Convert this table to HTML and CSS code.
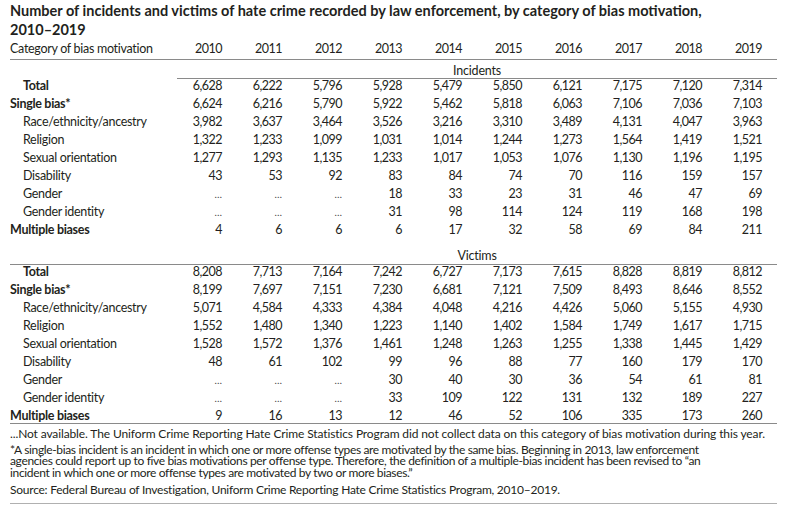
FILE: index.html
```html
<!DOCTYPE html>
<html lang="en">
<head>
<meta charset="utf-8">
<title>Hate crime incidents and victims, 2010–2019</title>
<link rel="stylesheet" href="styles.css">
</head>
<body>
<div class="page">
  <h1 class="title">Number of incidents and victims of hate crime recorded by law enforcement, by category of bias motivation, <span class="keep">2010–2019</span></h1>
  <table class="data">
    <colgroup>
      <col class="c-label">
      <col class="c-year"><col class="c-year"><col class="c-year"><col class="c-year"><col class="c-year">
      <col class="c-year"><col class="c-year"><col class="c-year"><col class="c-year"><col class="c-year">
    </colgroup>
    <thead>
      <tr class="head">
        <th class="lab">Category of bias motivation</th>
        <th>2010</th><th>2011</th><th>2012</th><th>2013</th><th>2014</th>
        <th>2015</th><th>2016</th><th>2017</th><th>2018</th><th>2019</th>
      </tr>
    </thead>
    <tbody>
      <tr class="sec-inc">
        <td class="blank"></td>
        <td class="sec-name" colspan="10">Incidents</td>
      </tr>
      <tr>
        <td class="lab ind bold">Total</td>
        <td>6,628</td><td>6,222</td><td>5,796</td><td>5,928</td><td>5,479</td><td>5,850</td><td>6,121</td><td>7,175</td><td>7,120</td><td>7,314</td>
      </tr>
      <tr>
        <td class="lab bold">Single bias*</td>
        <td>6,624</td><td>6,216</td><td>5,790</td><td>5,922</td><td>5,462</td><td>5,818</td><td>6,063</td><td>7,106</td><td>7,036</td><td>7,103</td>
      </tr>
      <tr>
        <td class="lab ind">Race/ethnicity/ancestry</td>
        <td>3,982</td><td>3,637</td><td>3,464</td><td>3,526</td><td>3,216</td><td>3,310</td><td>3,489</td><td>4,131</td><td>4,047</td><td>3,963</td>
      </tr>
      <tr>
        <td class="lab ind">Religion</td>
        <td>1,322</td><td>1,233</td><td>1,099</td><td>1,031</td><td>1,014</td><td>1,244</td><td>1,273</td><td>1,564</td><td>1,419</td><td>1,521</td>
      </tr>
      <tr>
        <td class="lab ind">Sexual orientation</td>
        <td>1,277</td><td>1,293</td><td>1,135</td><td>1,233</td><td>1,017</td><td>1,053</td><td>1,076</td><td>1,130</td><td>1,196</td><td>1,195</td>
      </tr>
      <tr>
        <td class="lab ind">Disability</td>
        <td>43</td><td>53</td><td>92</td><td>83</td><td>84</td><td>74</td><td>70</td><td>116</td><td>159</td><td>157</td>
      </tr>
      <tr>
        <td class="lab ind">Gender</td>
        <td><span class="na">…</span></td><td><span class="na">…</span></td><td><span class="na">…</span></td><td>18</td><td>33</td><td>23</td><td>31</td><td>46</td><td>47</td><td>69</td>
      </tr>
      <tr>
        <td class="lab ind">Gender identity</td>
        <td><span class="na">…</span></td><td><span class="na">…</span></td><td><span class="na">…</span></td><td>31</td><td>98</td><td>114</td><td>124</td><td>119</td><td>168</td><td>198</td>
      </tr>
      <tr>
        <td class="lab bold">Multiple biases</td>
        <td>4</td><td>6</td><td>6</td><td>6</td><td>17</td><td>32</td><td>58</td><td>69</td><td>84</td><td>211</td>
      </tr>
      <tr class="sec-vic">
        <td class="blank"></td>
        <td class="sec-name" colspan="10">Victims</td>
      </tr>
      <tr>
        <td class="lab ind bold">Total</td>
        <td>8,208</td><td>7,713</td><td>7,164</td><td>7,242</td><td>6,727</td><td>7,173</td><td>7,615</td><td>8,828</td><td>8,819</td><td>8,812</td>
      </tr>
      <tr>
        <td class="lab bold">Single bias*</td>
        <td>8,199</td><td>7,697</td><td>7,151</td><td>7,230</td><td>6,681</td><td>7,121</td><td>7,509</td><td>8,493</td><td>8,646</td><td>8,552</td>
      </tr>
      <tr>
        <td class="lab ind">Race/ethnicity/ancestry</td>
        <td>5,071</td><td>4,584</td><td>4,333</td><td>4,384</td><td>4,048</td><td>4,216</td><td>4,426</td><td>5,060</td><td>5,155</td><td>4,930</td>
      </tr>
      <tr>
        <td class="lab ind">Religion</td>
        <td>1,552</td><td>1,480</td><td>1,340</td><td>1,223</td><td>1,140</td><td>1,402</td><td>1,584</td><td>1,749</td><td>1,617</td><td>1,715</td>
      </tr>
      <tr>
        <td class="lab ind">Sexual orientation</td>
        <td>1,528</td><td>1,572</td><td>1,376</td><td>1,461</td><td>1,248</td><td>1,263</td><td>1,255</td><td>1,338</td><td>1,445</td><td>1,429</td>
      </tr>
      <tr>
        <td class="lab ind">Disability</td>
        <td>48</td><td>61</td><td>102</td><td>99</td><td>96</td><td>88</td><td>77</td><td>160</td><td>179</td><td>170</td>
      </tr>
      <tr>
        <td class="lab ind">Gender</td>
        <td><span class="na">…</span></td><td><span class="na">…</span></td><td><span class="na">…</span></td><td>30</td><td>40</td><td>30</td><td>36</td><td>54</td><td>61</td><td>81</td>
      </tr>
      <tr>
        <td class="lab ind">Gender identity</td>
        <td><span class="na">…</span></td><td><span class="na">…</span></td><td><span class="na">…</span></td><td>33</td><td>109</td><td>122</td><td>131</td><td>132</td><td>189</td><td>227</td>
      </tr>
      <tr class="last">
        <td class="lab bold">Multiple biases</td>
        <td>9</td><td>16</td><td>13</td><td>12</td><td>46</td><td>52</td><td>106</td><td>335</td><td>173</td><td>260</td>
      </tr>
    </tbody>
  </table>
  <div class="notes">
    <p class="note n1">...Not available. The Uniform Crime Reporting Hate Crime Statistics Program did not collect data on this category of bias motivation during this year.</p>
    <p class="note n2">*A single-bias incident is an incident in which one or more offense types are motivated by the same bias. Beginning in 2013, law enforcement<br>agencies could report up to five bias motivations per offense type. Therefore, the definition of a multiple-bias incident has been revised to “an<br>incident in which one or more offense types are motivated by two or more biases.”</p>
    <p class="note n3">Source: Federal Bureau of Investigation, Uniform Crime Reporting Hate Crime Statistics Program, 2010–2019.</p>
  </div>
</div>
</body>
</html>
```

FILE: styles.css
```css
html, body {
  margin: 0;
  padding: 0;
  background: #ffffff;
}

body {
  font-family: Lato, "Liberation Sans", sans-serif;
  color: #231f20;
}

.page {
  width: 767px;
  padding: 1px 0 0 10px;
}

.title {
  margin: 0;
  font-size: 14.5px;
  line-height: 19px;
  font-weight: bold;
  width: 760px;
}

.title .keep { white-space: nowrap; }

.data {
  border-collapse: separate;
  border-spacing: 0;
  table-layout: fixed;
  width: 767px;
  font-size: 12.5px;
}

.c-label { width: 167px; }
.c-year { width: 60px; }

.data th,
.data td {
  padding: 0 15px 4px 0;
  height: 14px;
  line-height: 14px;
  text-align: right;
  font-weight: normal;
  white-space: nowrap;
  vertical-align: top;
  letter-spacing: -0.5px;
}

.data .lab {
  text-align: left;
  padding-right: 0;
  letter-spacing: -0.3px;
}

.head th {
  padding-top: 3px;
  padding-bottom: 3px;
  border-bottom: 1px solid #8a8a8a;
}

.data .ind { padding-left: 13px; }
.data .bold { font-weight: bold; }

.sec-inc td {
  padding: 4px 0 0;
}

.sec-inc .sec-name {
  text-align: center;
  letter-spacing: -0.2px;
  border-bottom: 1px solid #8a8a8a;
}

.sec-vic td {
  padding: 8px 0 1px;
  border-bottom: 1px solid #8a8a8a;
}

.sec-vic .sec-name {
  text-align: center;
  letter-spacing: -0.2px;
}

.data .na {
  font-size: 10px;
  line-height: 0;
  letter-spacing: 0;
  color: #444;
}

.last td {
  padding-bottom: 0;
  border-bottom: 1px solid #8a8a8a;
}

.notes {
  width: 767px;
  font-size: 12px;
  border-bottom: 1px solid #b0b0b0;
}

.note {
  margin: 0;
  line-height: 11.5px;
  white-space: nowrap;
}

.n1 {
  padding: 4px 0 0;
  letter-spacing: -0.12px;
}

.n2 {
  padding: 4px 0 0;
  letter-spacing: -0.35px;
}

.n3 {
  padding: 5.5px 0 8px;
  letter-spacing: -0.24px;
}
```
